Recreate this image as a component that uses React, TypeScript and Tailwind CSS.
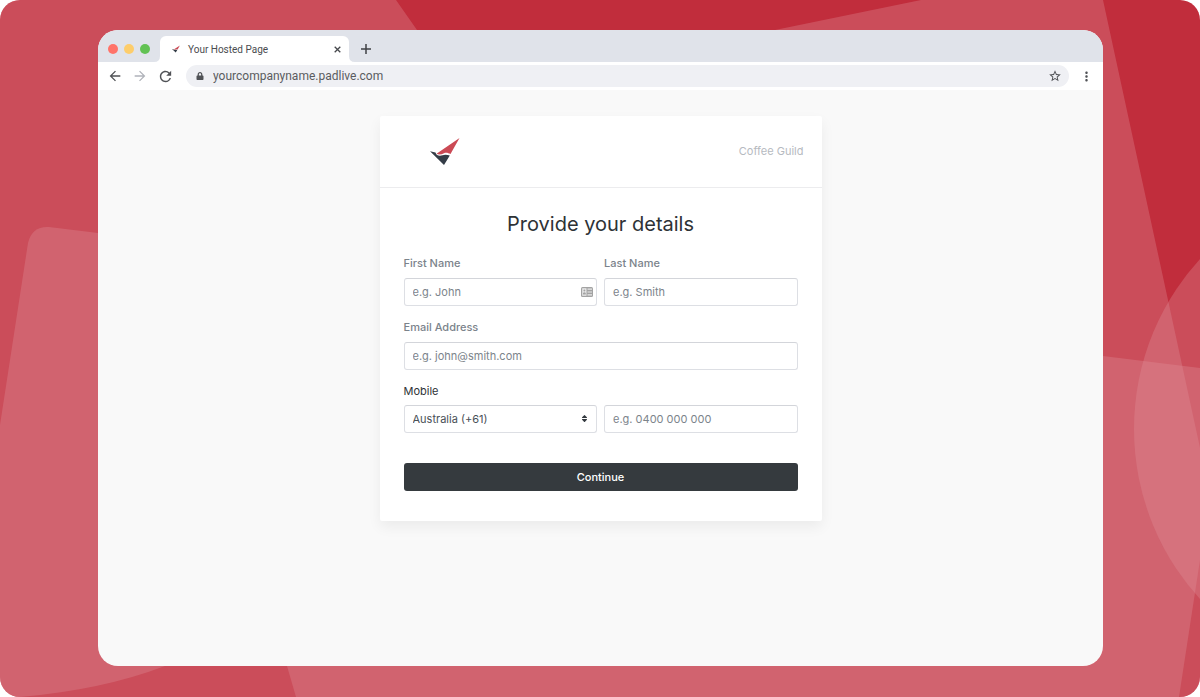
import React from "react";
import { FaLock, FaSort } from "react-icons/fa";
import { MdArrowBack, MdArrowForward, MdRefresh, MdStarBorder, MdMoreVert } from "react-icons/md";

const fieldClass =
  "h-7 w-full rounded-[3px] border border-[#dddfe4] border-t-[#d3d5da] bg-white px-2 text-[11px] text-[#495057] outline-none placeholder:text-[#7c848b] focus:border-[#8a94a0]";

const labelClass = "mb-[7px] block leading-4 font-medium text-[#7b838b]";

const Logo = ({ className }: { className: string }) => (
  <svg viewBox="0 0 30 27" className={className} aria-hidden="true">
    <path d="M29.500 0 L20.500 16 C18.500 15.300 16.500 14.200 14 15.200 C11.500 16.400 9 17 6.500 15.800 Z" fill="#cb4a55" />
    <path d="M0 13.200 L5.500 14.400 C6.300 17.600 9.500 18.300 12.500 17.200 C15.500 16 17.500 17 19.800 17.400 L14 27 Z" fill="#343d47" />
  </svg>
);

const Backdrop = () => (
  <svg
    viewBox="0 0 1200 697"
    preserveAspectRatio="none"
    className="absolute inset-0 h-full w-full"
    aria-hidden="true"
  >
    <g fill="#e0919d" fillOpacity="0.32">
      <path d="M0 0 H396 L480 120 L775 30 V30 L921 0 H1103 L1254 697 H0 Z" />
      <path d="M0 425 L28 243 Q32 226 49 227 L98 233 L400 270 L300 610 L165 666 Q102 690 20 697 H0 Z" />
      <path d="M240 500 L500 282 L1103 356 L1200 368 V560 L1179 697 H296 L287 666 Z" />
      <circle cx="1386" cy="429" r="252" />
    </g>
  </svg>
);

const TabFillet = ({ flip }: { flip?: boolean }) => (
  <svg viewBox="0 0 6 6" className={flip ? "h-1.5 w-1.5 -scale-x-100" : "h-1.5 w-1.5"} aria-hidden="true">
    <path d="M6 0 Q6 6 0 6 H6 Z" fill="#fff" />
  </svg>
);

const TabBar = () => (
  <div className="flex h-8 items-end bg-[#e0e3ea] pl-[10px]">
    <div className="flex h-[26px] w-[46px] items-center gap-[6px]">
      <span className="h-[10px] w-[10px] rounded-full bg-[#ff7369]" />
      <span className="h-[10px] w-[10px] rounded-full bg-[#fdcd6b]" />
      <span className="h-[10px] w-[10px] rounded-full bg-[#62c254]" />
    </div>
    <TabFillet />
    <div className="flex h-[26px] w-[189px] items-center rounded-t-md bg-white pl-3 pr-[8px]">
      <Logo className="h-2 w-2" />
      <span className="ml-2 flex-1 text-[10px] text-[#4a4c50]">Your Hosted Page</span>
      <button type="button" aria-label="Close tab" className="text-[#46484c]">
        <svg viewBox="0 0 7 7" className="h-[7px] w-[7px]" stroke="currentColor" strokeWidth="1.300" aria-hidden="true">
          <path d="M0.700 0.700 L6.300 6.300 M6.300 0.700 L0.700 6.300" />
        </svg>
      </button>
    </div>
    <TabFillet flip />
    <button type="button" aria-label="New tab" className="ml-[6px] flex h-[26px] items-center text-[#3f4145]">
      <svg viewBox="0 0 10 10" className="h-[10px] w-[10px]" stroke="currentColor" strokeWidth="1.500" aria-hidden="true">
        <path d="M5 0 V10 M0 5 H10" />
      </svg>
    </button>
  </div>
);

const Toolbar = () => (
  <div className="flex h-[28px] items-center bg-white pl-[9px] pr-[9px] text-[#505256]">
    <button type="button" aria-label="Back">
      <MdArrowBack size={16} />
    </button>
    <button type="button" aria-label="Forward" className="ml-[9px] text-[#b0b3ba]">
      <MdArrowForward size={16} />
    </button>
    <button type="button" aria-label="Reload" className="ml-[9px]">
      <MdRefresh size={17} />
    </button>
    <div className="ml-3 flex h-[22px] flex-1 items-center rounded-full bg-[#eff0f4] pl-[10px] pr-[7px]">
      <FaLock size={8} />
      <input
        type="text"
        aria-label="Address"
        defaultValue="yourcompanyname.padlive.com"
        className="ml-[9px] min-w-0 flex-1 bg-transparent text-[12px] text-[#5a5c60] outline-none"
      />
      <button type="button" aria-label="Bookmark this page">
        <MdStarBorder size={14} />
      </button>
    </div>
    <button type="button" aria-label="Menu" className="ml-[10px]">
      <MdMoreVert size={15} />
    </button>
  </div>
);

const DetailsForm = () => (
  <form className="px-6 pt-[22px] pb-[30px] text-[11px]" onSubmit={(e) => e.preventDefault()}>
    <h1 className="mb-[17px] text-center text-[20px] leading-7 text-[#2e3236]">Provide your details</h1>

    <div className="grid grid-cols-2 gap-x-[7px]">
      <div>
        <label htmlFor="firstName" className={labelClass}>First Name</label>
        <div className="relative">
          <input id="firstName" type="text" placeholder="e.g. John" className={fieldClass} />
          {/* Contact card autofill hint */}
          <svg viewBox="0 0 12 10" className="absolute top-[9px] right-1 h-[10px] w-3" aria-hidden="true">
            <rect width="12" height="10" rx="1.500" fill="#a3a3a3" />
            <path d="M1.200 1.200 H5.500 V8.800 H1.200 Z" fill="#e9e9e9" />
            <circle cx="3.400" cy="3.500" r="1" fill="#a3a3a3" />
            <path d="M2 7.500 V6 Q3.400 4.300 4.800 6 V7.500 Z" fill="#a3a3a3" />
            <path d="M6.500 2.200 H11 M6.500 5 H11 M6.500 7.800 H11" stroke="#e9e9e9" strokeWidth="1.200" />
          </svg>
        </div>
      </div>
      <div>
        <label htmlFor="lastName" className={labelClass}>Last Name</label>
        <input id="lastName" type="text" placeholder="e.g. Smith" className={fieldClass} />
      </div>
    </div>

    <label htmlFor="email" className={`${labelClass} mt-[13px]`}>Email Address</label>
    <input id="email" type="email" placeholder="e.g. john@smith.com" className={fieldClass} />

    <label htmlFor="mobile" className="mt-[13px] mb-[6px] block leading-4 text-[#2e3236]">Mobile</label>
    <div className="grid grid-cols-2 gap-x-[7px]">
      <div className="relative">
        <select aria-label="Country code" className={`${fieldClass} appearance-none`}>
          <option>Australia (+61)</option>
        </select>
        <FaSort size={9} className="pointer-events-none absolute top-[9px] right-2 text-[#343a40]" />
      </div>
      <input id="mobile" type="tel" placeholder="e.g. 0400 000 000" className={fieldClass} />
    </div>

    <button
      type="submit"
      className="mt-[30px] h-7 w-full rounded-[3px] bg-[#353a3e] font-medium text-white hover:bg-[#23272b]"
    >
      Continue
    </button>
  </form>
);

const App = () => {
  return (
    <div className="bg-white">
      <div className="relative flex min-h-screen overflow-hidden rounded-[20px] bg-[#c12d3c] pt-[30px] pr-[97px] pb-[31px] pl-[98px]">
        <Backdrop />
        <div className="relative flex min-w-0 flex-1 flex-col overflow-hidden rounded-[20px] bg-[#f9f9f9] font-['Roboto',sans-serif]">
          <TabBar />
          <Toolbar />
          <main className="flex flex-1 flex-col items-center px-4 pt-[26px] pb-10 font-['Inter',sans-serif]">
            <div className="w-full max-w-[442px] rounded-[2px] bg-white shadow-[0_6px_14px_rgba(0,0,0,0.06)]">
              <header className="flex h-[72px] items-center justify-between border-b border-[#ececee] pr-[18px] pl-[50px]">
                <Logo className="h-[27px] w-[30px]" />
                <span className="text-[11px] text-[#b6babf]">Coffee Guild</span>
              </header>
              <DetailsForm />
            </div>
          </main>
        </div>
      </div>
    </div>
  );
};

export default App;
